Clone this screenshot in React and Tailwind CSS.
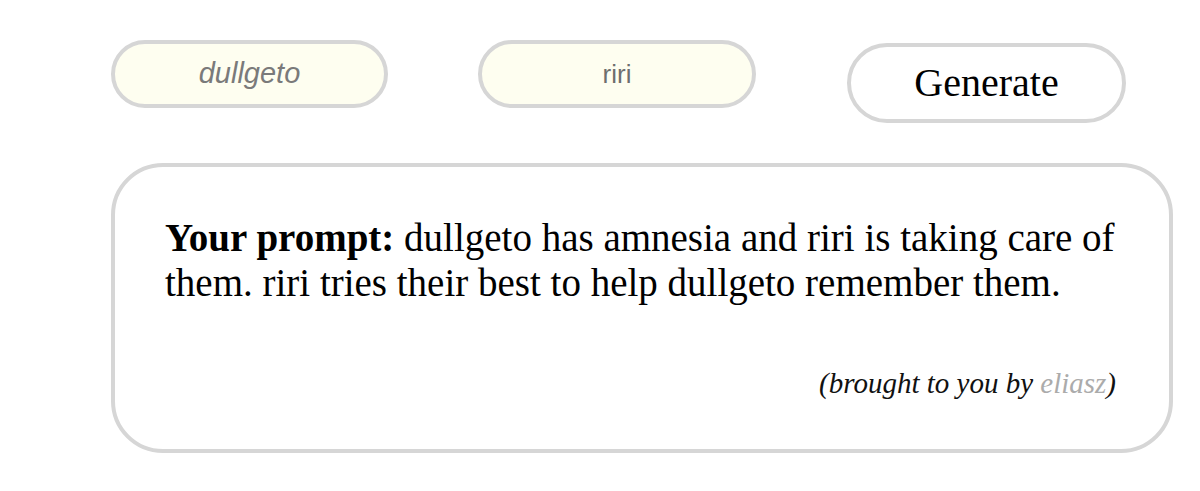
const serif = { fontFamily: '"Liberation Serif", "Times New Roman", serif' };

export default function App() {
  return (
    <div className="min-h-screen bg-white pl-[111px] pt-[40px]" style={serif}>
      <div className="flex items-start">
        <div
          className="flex h-[68px] w-[277px] items-center justify-center rounded-full border-4 border-[#d6d6d6] bg-[#fefef0] font-['Liberation_Sans',Arial,sans-serif] text-[29px] italic text-[#7a7a7a]"
        >
          dullgeto
        </div>
        <div
          className="ml-[90px] flex h-[68px] w-[278px] items-center justify-center rounded-full border-4 border-[#d6d6d6] bg-[#fefef0] font-['Liberation_Sans',Arial,sans-serif] text-[26px] text-[#6e6e6e]"
        >
          riri
        </div>
        <button
          type="button"
          className="ml-[91px] mt-[3px] flex h-[80px] w-[279px] items-center justify-center rounded-full border-4 border-[#d6d6d6] bg-white text-[40px] text-black"
        >
          Generate
        </button>
      </div>

      <div className="mt-[40px] w-[1062px] rounded-[52px] border-4 border-[#d6d6d6] pb-[43px] pl-[50px] pr-[30px] pt-[48px]">
        <p className="text-[39px] leading-[45px] text-black">
          <span className="font-bold">Your prompt:</span> dullgeto has amnesia and riri is taking care of them. riri tries
          their best to help dullgeto remember them.
        </p>
        <p className="mt-[57px] pr-[23px] text-right text-[29px] italic text-[#111]">
          (brought to you by <span className="text-[#ababab]">eliasz</span>)
        </p>
      </div>
    </div>
  );
}
